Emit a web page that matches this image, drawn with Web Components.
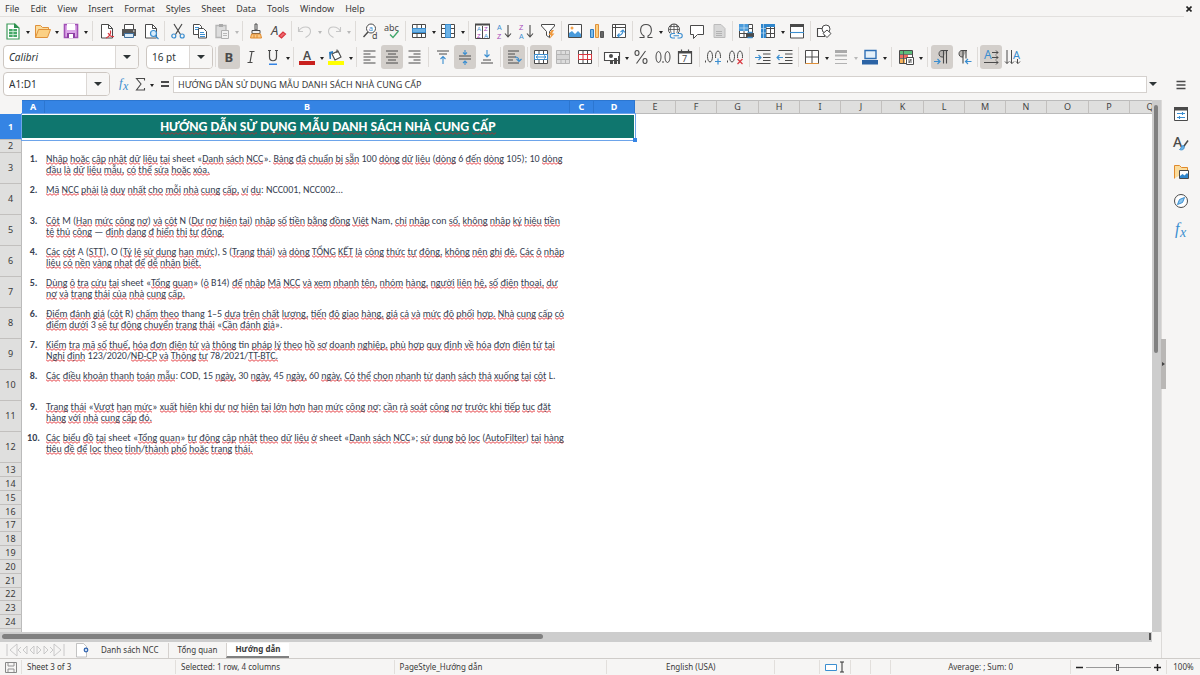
<!DOCTYPE html>
<html lang="vi">
<head>
<meta charset="utf-8">
<title>Danh sách nhà cung cấp - Calc</title>
<style>
html, body { margin: 0; height: 100%; overflow: hidden; }
body { font: 9px/12px "Noto Sans", sans-serif; color: #3a3a3a; background: #f6f5f4; }
</style>
</head>
<body>
<calc-app>
  <menu-bar slot="menu"></menu-bar>
  <tool-bar slot="tools" kind="standard"></tool-bar>
  <tool-bar slot="tools" kind="format"></tool-bar>
  <formula-bar slot="formula"></formula-bar>
  <sheet-grid slot="sheet"></sheet-grid>
  <sheet-tabs slot="tabs"></sheet-tabs>
  <side-bar slot="side"></side-bar>
  <status-bar slot="status"></status-bar>
</calc-app>
<script>
const D = '#4a4a4a', B = '#3b8ed0', V = '#a544b8';
const p = (d, c = D, w = 1, f = 'none') => `<path d="${d}" fill="${f}" stroke="${c}" stroke-width="${w}"/>`;
const f = (d, c = D) => `<path d="${d}" fill="${c}"/>`;
const t = (x, y, s, txt, c = D, extra = '') => `<text x="${x}" y="${y}" font-size="${s}" fill="${c}" ${extra}>${txt}</text>`;
const L = 'style="font-family:\'Liberation Sans\',sans-serif"';
const S = 'style="font-family:\'Liberation Serif\',serif;font-style:italic"';
const grid = (c = D, fill = '#fff') => p('M4.5 4.5h13v13h-13zM4.5 8.5h13M4.5 13.5h13M9 4.5v13M13.5 4.5v13', c, 1, fill);
const ICONS = {
  new: p('M5 4h8l4 4v11H5z', '#3f9b5b', 1.2, '#fff') + f('M12 3l5 5h-5z', '#2f9150') + f('M7 9h8v8H7z', '#46a868') + p('M7 11.5h8M7 14.5h8M11 9v8', '#d8f0df', .8),
  open: p('M4.5 17.5v-12h5l2 2h6v2', '#e0913a', 1, '#fbdc9c') + p('M4.5 17.5l3-8h12l-3 8z', '#e0913a', 1, '#fbd084'),
  save: p('M4.5 4.5h13v13h-13z', '#a04fb5', 1.6, '#dca7e8') + f('M7 4h8v6H7z', '#fff') + f('M7 13h8v5H7z', '#8d3fa3') + f('M9 14h4v4H9z', '#fff'),
  pdf: p('M5.5 4.5h7l4 4v9.500h-11z', D, 1, '#fff') + p('M12.500 4.500v4h4') + p('M10 18c4-1 5-5 4.500-7.500M12 13c2 3 3 4 6 3.500', '#d9363e', 1.2),
  print: f('M4 9h14v7H4z', '#555') + p('M6.5 9V4.500h9V9', D, 1, '#fff') + p('M6.500 13.500h9v4h-9z', '#3f6f9d', 1, '#dcecf8') + f('M15 10.500h1.500v1H15z', '#fff'),
  preview: p('M5.500 4.500h7l4 4v9.500h-11z', D, 1, '#fff') + p('M12.500 4.500v4h4') + p('M16.500 13.500a3 3 0 1 1-6 0a3 3 0 1 1 6 0M15.500 16l3 3', B, 1.2, '#d9edfb'),
  cut: p('M7 4l6.500 10.500M15 4L8.500 14.500', D, 1.2) + p('M8.800 16a2 2 0 1 1-4 0a2 2 0 1 1 4 0M17.200 16a2 2 0 1 1-4 0a2 2 0 1 1 4 0', B, 1.2),
  copy: p('M4.500 4.500h6l2 2v8h-8z', D, 1, '#fff') + p('M6 7.500h4M6 9.500h4', B) + p('M9.500 8.500h5l3 3v6.500h-8z', D, 1, '#fff') + p('M11 12.500h4M11 14.500h5M11 16.500h5', B),
  paste: p('M5 5.500h10v12H5z', '#b5b5b5', 1.300, '#ddd') + f('M8 4h4v3H8z', '#aaa') + p('M10.500 10.500h7v8h-7z', '#b0b0b0', 1, '#f2f2f2') + p('M12 13.500h4M12 15.500h4', '#b8b8b8'),
  brush: p('M10 4h2v6h-2zM7 10.500h8v3H7z', D, 1, '#eee') + p('M6.500 14h9l1 4h-11z', '#e08a2c', 1, '#f9c784') + p('M9 15v3M12 15v3', '#e08a2c'),
  clear: t(4, 15, 13, 'A', D, 'font-style="italic"') + p('M12 16l4-4l2.500 2l-4 4z', '#d9363e', 1.200, '#ef6a70'),
  undo: p('M4.500 7v4.500H9M4.500 11.500c3-6 12-6 12 0c0 3-3 5-5 6', '#c6c6c6', 1.100),
  redo: p('M17.500 7v4.500H13M17.500 11.500c-3-6-12-6-12 0c0 3 3 5 5 6', '#c6c6c6', 1.100),
  find: `<circle cx="12" cy="8.500" r="4.500" fill="#fff" stroke="${D}"/>` + p('M9 12l-4.500 5', D, 1.400) + t(9.800, 11, 7.500, 'a', B) + t(13, 18.500, 9, 'd', D),
  spell: t(3, 11, 9, 'abc') + p('M9 14.500l3 3L17.500 11', '#3fa66a', 1.300),
  row: grid() + p('M4.500 8.500h13v4h-13z', B, 1, '#6cb2e6'),
  col: grid() + p('M8.500 4.500h5v13h-5z', B, 1, '#6cb2e6'),
  sort: p('M4.500 4.500h14v14h-14zM11.500 6v12', D, 1, '#fff') + f('M4 3.500h15v2H4z') + t(6, 11, 6, 'A', B, L) + t(6, 18, 6, 'Z', V, L) + t(13, 11, 6, 'Z', V, L) + t(13, 18, 6, 'A', B, L),
  az: t(4, 9.500, 7, 'A', B, L) + t(4, 18.500, 7, 'Z', V, L) + p('M15 5v12M12 13.500l3 3.500l3-3.500', D, 1.100),
  za: t(4, 9.500, 7, 'Z', V, L) + t(4, 18.500, 7, 'A', B, L) + p('M15 5v12M12 13.500l3 3.500l3-3.500', D, 1.100),
  filter: p('M4.500 4.500h13v1.500l-5 5.500v6l-3-2v-4l-5-5.500z', D, 1, '#fff') + f('M14.500 10l-3 5h2.500l-1.500 4l5-5.500h-2.500l2-3.500z', '#f09a3e'),
  image: p('M4.500 4.500h13v13h-13z', D, 1, '#fff') + f('M5 17v-4l3-2l3 3l3-3l3 3v3z', '#4a9bdb') + `<circle cx="8" cy="8" r="1.500" fill="#f3a24e"/>`,
  chart: p('M4.500 9.500h3v8h-3z', '#2f7dc0', 1, '#7dbdea') + p('M9.500 4.500h3v13h-3z', '#e0913a', 1, '#fbd084') + p('M14.500 11.500h3v6h-3z', '#555', 1, '#666'),
  pivot: p('M4.500 4.500h13v13h-13zM4.500 7.500h13M7.500 4.500v13', D, 1, '#fff') + p('M10 15.500c3 0 5-2 5-5M12.500 12l2.500-2l2 2.500M11.500 13.500l-2 2l2 2', B, 1.100),
  omega: p('M4.500 17.500h4.500v-1.500c-5-3-4.500-11.500 2-11.500s7 8.500 2 11.500v1.500h4.500', D, 1.100),
  link: `<circle cx="10" cy="9.500" r="5.500" fill="#fff" stroke="${D}"/>` + p('M4.500 9.500h11M10 4v11M6 6.500h8M8 4.500c-2 3-2 7 0 10M12 4.500c2 3 2 7 0 10', D, .8) + f('M6 13h13v6H6z', '#f6f5f4') + p('M11 13.500H8.500c-3 0-3 4.500 0 4.500H11M13.500 13.500H16c3 0 3 4.500 0 4.500h-2.500M9.500 15.800h5.500', B, 1.100),
  comment: p('M4.500 5.500h13v9h-6l-4 4v-4h-3z', D, 1, '#fff'),
  page: p('M6 4.500h7l4 4v9H6z', '#bcbcbc', 1, '#d8d8d8') + p('M8 11.500h6M8 13.500h6M8 15.500h6', '#b2b2b2'),
  printarea: grid() + f('M4 4h9.500v7H4z', '#4a9bdb') + p('M4.500 8h9M9 4v7', '#cfe6f7', .7) + f('M11 13h8v4h-8z') + p('M12.500 12.500h5M12.500 17.500h5', B, 1.300),
  freeze: grid() + f('M4 4h5v14H4zM9 4h9v3H9z', '#2f86cc') + p('M4 8.500h5M4 13h5M6.500 4v14', '#bfe0f7', .7),
  split: p('M4.500 5v13h13V5', D, 1, '#fff') + f('M4 4h14v3H4z') + p('M4 12.500h14', B, 1.100, 'none'),
  shapes: p('M4.500 8.500h7v8h-7z', D, 1.100, '#fff') + `<circle cx="13" cy="9" r="4" fill="#fff" stroke="${D}"/>` + p('M14 10l4 3.500l-4 4l-4-4z', D, 1, '#fff'),

  bold: t(6.500, 16, 13, 'B', D, 'font-weight="700"'),
  italic: p('M9.500 5.500h5M7.500 16.500h5M12 5.500l-2 11', D, 1.200),
  underline: p('M7.500 4.500v6.500c0 5 7 5 7 0v-6.500M6 4.500h3M13 4.500h3', D, 1.200) + f('M7 17.500h8v1.500H7z', '#3584e4'),
  color: t(7, 14, 12, 'A', D, 'font-weight="600"') + f('M3 15h16v4H3z', '#c9211e'),
  fill: p('M7 8l6-3l3 6l-6 3zM12 7V3.500', D, 1.100, '#fff') + f('M4 6l4-1v2l-2 1v5H4.500z', '#2f7dc0') + f('M3 15h16v4H3z', '#ffff00'),
  left: p('M4.500 5h12M4.500 8h7M4.500 11h12M4.500 14h7M4.500 17h12'),
  center: p('M5 5h12M7 8h8M5 11h12M7 14h8M5 17h12'),
  right: p('M5.500 5h12M10.500 8h7M5.500 11h12M10.500 14h7M5.500 17h12'),
  top: p('M5 5h12M7 8h8') + p('M11 18v-7M8.500 13l2.500-2.500L13.500 13', B, 1.100),
  middle: p('M5 10h12M5 13h12') + p('M11 4v4M9 6.500l2 2l2-2M11 19v-4M9 17l2-2l2 2', B, 1.100),
  bottom: p('M5 17h12M7 14h8') + p('M11 4v7M8.500 8.500l2.500 2.500l2.500-2.500', B, 1.100),
  wrap: p('M5 5h11M5 8h7M5 11h8M5 14h5M5 17h11') + p('M12 11c3 0 4 1 4 4M13.500 13l2.500 2.500L18.500 13', B, 1.100),
  merge: grid() + p('M4.500 8.500h13v5h-13z', B, 1, '#fff') + p('M6 11h10M8 9.500L6 11l2 1.500M14 9.500l2 1.500l-2 1.500', B),
  mergecells: grid('#b5b5b5', '#ddd') + f('M5 9h12v4H5z', '#d5d5d5'),
  unmerge: grid() + p('M4.500 8.500h13v5h-13zM9 8.500v5M13.500 8.500v5', '#d9363e', 1, '#fff'),
  currency: p('M3.500 6.500h15v8h-15z', D, 1.100, '#fff') + `<circle cx="10" cy="10" r="2" fill="${D}"/>` + f('M9 14h3v4H9zM13 12h3v6h-3zM17 10h2v8h-2z'),
  percent: p('M15.500 5l-9 12.500M9 7a2 2.500 0 1 1-4 0a2 2.500 0 1 1 4 0M17 15a2 2.500 0 1 1-4 0a2 2.500 0 1 1 4 0', D, 1.100),
  decimal: p('M9 11a2.500 5.500 0 1 1-5 0a2.500 5.500 0 1 1 5 0M18 11a2.500 5.500 0 1 1-5 0a2.500 5.500 0 1 1 5 0M11 15v2', D, 1),
  date: p('M4.500 5.500h13v12h-13zM7.500 3.500v3M14.500 3.500v3', D, 1.200, '#fff') + f('M4 5h14v2.500H4z') + t(8, 16, 9, '7'),
  adddec: p('M9.500 10.500a2.500 5.500 0 1 1-5 0a2.500 5.500 0 1 1 5 0M17.500 10.500a2.500 5.500 0 1 1-5 0a2.500 5.500 0 1 1 5 0M2.500 14.500v2', D, 1) + f('M12 12h7v7h-7z', '#f6f5f4') + p('M15 12.500v6M12 15.500h6', B, 1.200),
  deldec: p('M9.500 10.500a2.500 5.500 0 1 1-5 0a2.500 5.500 0 1 1 5 0M17.500 10.500a2.500 5.500 0 1 1-5 0a2.500 5.500 0 1 1 5 0M2.500 14.500v2', D, 1) + f('M12 12h7v7h-7z', '#f6f5f4') + p('M12.500 13l5 5M17.500 13l-5 5', '#d9363e', 1.200),
  indent: p('M4.500 4.500h14M11 8h7.500M11 11.500h7.500M11 14.500h7.500M4.500 17.500h14') + p('M3 11.500h6M6.500 9l2.500 2.500L6.500 14', B, 1.100),
  outdent: p('M4.500 4.500h14M11 8h7.500M11 11.500h7.500M11 14.500h7.500M4.500 17.500h14') + p('M9 11.500H3M5.500 9L3 11.500L5.500 14', B, 1.100),
  borders: p('M4.500 4.500h13v13h-13zM11 4.500v13M4.500 11h13', D, 1, '#fff') + p('M4.500 17.500h13', '#e0913a'),
  lines: p('M5 5.500h12', '#aaa', 3) + p('M5 9.500h12', '#b2b2b2', 2) + p('M5 13.500h12M5 17.500h12', '#b2b2b2', 1, 'none'),
  bcolor: p('M6 4.500h11v8H6z', '#2f6fb5', 1.400, '#e4f0fa') + f('M3 14h16v4.500H3z', '#2b63a5'),
  cond: p('M4.500 4.500h13v13h-13z', D, 1, '#fff') + f('M5 5h12v3H5z', '#5bbd7b') + f('M5 9h8v3H5z', '#ef6a60') + f('M5 13h5v4H5z', '#f5b25c') + p('M4.500 8.500h13M4.500 12.500h13M8.500 4.500v13', D, .8) + p('M11.500 11.500h7v7h-7z', D, 1, '#fff') + p('M13 14h4M13 16h4M16 13l-2 4', D, .8),
  ltr: p('M17 4.500H11c-4 0-4 6.500 0 6.500h1', D, 1, '#b8b5b2') + p('M12.500 4.500v13M15.500 4.500v13', D, 1.100) + p('M3 15.500h6M6.500 13L9 15.500L6.500 18', B, 1.200),
  rtl: p('M14 4.500H9c-4 0-4 6.500 0 6.500h1', D, 1, '#b8b5b2') + p('M10 4.500v13M13 4.500v8', D, 1.100) + p('M18.500 15.500h-6M15 13l-2.500 2.500L15 18', B, 1.200),
  texth: t(4, 13, 12, 'A', B) + p('M12 6.500h6M16 4.500l2 2l-2 2M12 11.500h6M16 9.500l2 2l-2 2M4 16.500h14M16 14.500l2 2l-2 2', D, 1),
  textv: t(11, 13, 11, 'A', B) + p('M5 4v13.500M3 15.500l2 2l2-2M9.500 4v13.500M8 15.500l2 2l2-2M15.500 13v4.500M14 15.500l2 2l2-2', D, 1),

  fx: t(6, 14, 13, 'f', B, S) + t(10, 17, 12, 'x', B, S),
  sidefx: t(5, 15, 16, 'f', B, S) + t(10, 18, 14, 'x', B, S),
  sigma: p('M15.500 7.500V5.500H7.500l4.500 5.500l-4.500 6h8v-2', D, 1.100),
  equals: p('M7 9h8M7 13h8', D, 1.800),
  menu: p('M6.500 7.500h9M6.500 11h9M6.500 14.500h9', D, 1.500),
  props: p('M4.500 5.500h13v12h-13z', D, 1, '#fff') + f('M4 4h14v3.500H4z') + p('M7 10.500h8M12.500 9v3M7 14.500h8M9.500 13v3', B, 1.100),
  styles: t(3, 15, 14, 'A', D, 'font-weight="500"') + p('M18 8.500l-5 7', D, 1.500) + p('M13.500 13.500c-2.500 0-2 3-4 4c2.500 1 5.500 0 4.500-3.500z', B, 1, '#6cb2e6'),
  gallery: p('M4.500 17.500v-13h5l2 2h6v3', '#e08a2c', 1, '#fbdc9c') + p('M9.500 9.500h9v8h-9z', D, 1, '#fff') + f('M10 17v-2l2.500-2l2 1.500L17 12l1 1v4z', '#2f86cc'),
  navigator: `<circle cx="11" cy="11" r="6.500" fill="#fff" stroke="${D}"/>` + p('M14.500 7.500l-2 5l-5 2l2-5z', B, 1, '#8cc4ec') ,
  addsheet: p('M4.500 4.500h7l3 3v10.500h-10z', '#aaa', .7, '#fff') + `<circle cx="14" cy="11" r="1.800" fill="#cfe0f5" stroke="#2f62ae" stroke-width="1.200"/>`,
  disk: p('M5.500 6.500h11v10h-11z', '#888', 1) + p('M8 6.500v3.500h6V6.500M8 16.500v-3.500h6v3.500', '#888', .9),
  first: p('M5 5v12M15 5L8 11l7 6zM19 8l-3 3l3 3', '#c4c4c4', .9),
  prev: p('M10 7L6 11l4 4zM17 7l-4 4l4 4z', '#c4c4c4', .9),
  next: p('M5 7l4 4l-4 4zM12 7l4 4l-4 4z', '#c4c4c4', .9),
  last: p('M17 5v12M7 5l7 6l-7 6zM3 8l3 3l-3 3', '#c4c4c4', .9)
};

function define(name, css, render) {
  customElements.define(name, class extends HTMLElement {
    connectedCallback() {
      if (this.shadowRoot) return;
      this.attachShadow({ mode: 'open' }).innerHTML = `<style>:host,*{box-sizing:border-box}${css}</style>${render(this)}`;
    }
  });
}

define('ui-icon', ':host{display:block;width:22px;height:22px}svg{display:block;width:22px;height:22px}text{font-family:"Noto Sans",sans-serif}',
  el => `<svg viewBox="0 0 22 22" aria-hidden="true">${ICONS[el.getAttribute('name')] || ''}</svg>`);

define('tool-button', `
  :host{display:flex;align-items:center}
  button{border:0;background:none;padding:0;margin:0}
  .main{width:var(--button-width,22px);height:24px;border-radius:3px;display:grid;place-content:center}
  :host([on]) .main{background:#d3cfcb}
  .drop{width:7px;height:24px;display:grid;place-items:center}
  .drop::before{content:"";border:2px solid transparent;border-top:3px solid #222;border-bottom:0;margin-top:3px}
  :host([off]) .drop::before{border-top-color:#b8b8b8}`,
  el => `<button class="main" aria-label="${el.getAttribute('icon')}"><ui-icon name="${el.getAttribute('icon')}"></ui-icon></button>` +
    (el.hasAttribute('drop') ? `<button class="drop" aria-label="${el.getAttribute('icon')} options"></button>` : ''));

define('combo-field', `
  :host{display:flex;height:24px;border:1px solid #cdc7c2;border-radius:4px;background:#fff;overflow:hidden}
  input{flex:1;min-width:0;border:0;outline:0;padding:0 0 0 5px;background:none;font:inherit;font-size:10px;color:#2e3436}
  :host([italic]) input{font-style:italic}
  button{width:23px;border:0;border-left:1px solid #dcd8d5;background:#f7f6f5;padding:0;display:grid;place-items:center}
  button::before{content:"";border:4px solid transparent;border-top:4px solid #2e3436;border-bottom:0}`,
  el => `<input aria-label="${el.getAttribute('label')}" value="${el.getAttribute('value')}"><button aria-label="${el.getAttribute('label')} list"></button>`);

define('calc-app', `
  :host{display:flex;flex-direction:column;height:100vh;overflow:hidden}
  .middle{flex:1;min-height:0;display:flex}
  .work{flex:1;min-width:0;display:flex;flex-direction:column}
  ::slotted(sheet-grid){flex:1;min-height:0}`,
  () => `<slot name="menu"></slot><slot name="tools"></slot>
  <div class="middle"><div class="work"><slot name="formula"></slot><slot name="sheet"></slot><slot name="tabs"></slot></div><slot name="side"></slot></div>
  <slot name="status"></slot>`);

define('menu-bar', `
  :host{display:block;height:17px;padding-right:16px;position:relative}
  nav{display:flex;gap:11px;height:17px;padding:2px 0 0 5px;border-bottom:1px solid #e2e0de}
  button{border:0;background:none;padding:0;font:inherit;color:inherit;height:13px}
  .close{position:absolute;right:4px;top:2px;width:14px}
  svg{display:block;margin:auto}`,
  () => `<nav>${'File Edit View Insert Format Styles Sheet Data Tools Window Help'.split(' ').map(x => `<button>${x}</button>`).join('')}</nav>
  <button class="close" aria-label="Close"><svg width="6" height="6" viewBox="0 0 6 6"><path d="M.5.5l5 5M5.500.5l-5 5" stroke="#222" stroke-width="1.600"/></svg></button>`);

const BARS = {
  standard: 'new+ open+ save+ || pdf print preview | cut copy paste-+ | brush clear | undo-+ redo-+ || find spell | row+ col+ | sort az za filter | image chart pivot | omega+ link comment page | printarea freeze+ split | shapes',
  format: 'bold! italic underline+ | color+ fill+ | left center! right || top middle! bottom | wrap! | merge! mergecells unmerge | currency+ percent decimal date || adddec deldec | indent outdent | borders+ lines-+ bcolor+ || cond+ || ltr! rtl | texth! textv'
};
define('tool-bar', `
  :host{display:flex;align-items:center;height:27px;padding-left:2px}
  :host([kind=format]){height:26px;padding-left:3px}
  .sep{width:5px;height:20px;display:grid;justify-content:center}
  .sep.wide{width:7px}
  .sep::before{content:"";width:1px;background:#dedbd8}
  .font{width:136px;margin-right:7px}
  .size{width:67px}`,
  el => (el.getAttribute('kind') === 'format' ? '<combo-field class="font" italic label="Font name" value="Calibri"></combo-field><combo-field class="size" label="Font size" value="16 pt"></combo-field><span class="sep"></span>' : '') +
    BARS[el.getAttribute('kind')].split(' ').map(s => s[0] === '|' ? `<span class="sep${s[1] ? ' wide' : ''}"></span>` :
      `<tool-button icon="${s.match(/\w+/)[0]}"${s.includes('+') ? ' drop' : ''}${s.includes('-') ? ' off' : ''}${s.includes('!') ? ' on' : ''}></tool-button>`).join(''));

define('formula-bar', `
  :host{display:flex;align-items:center;height:30px;padding:0 4px 2px 3px;--button-width:16px}
  combo-field{width:107px;margin-right:6px}
  .eq{margin-left:2px}
  .line{flex:1;min-width:0;height:17px;border:1px solid #d5d1ce;background:#fff;padding:0 4px;font:inherit;color:#3a3a3a;outline:0}
  .more{width:11px;height:17px;border:0;background:none;padding:0;display:grid;place-items:center}
  .more::before{content:"";border:4px solid transparent;border-top:4px solid #2e3436;border-bottom:0}`,
  () => `<combo-field label="Name box" value="A1:D1"></combo-field>
  <tool-button icon="fx"></tool-button><tool-button icon="sigma" drop></tool-button><tool-button class="eq" icon="equals"></tool-button>
  <input class="line" aria-label="Input line" value="HƯỚNG DẪN SỬ DỤNG MẪU DANH SÁCH NHÀ CUNG CẤP"><button class="more" aria-label="Expand formula bar"></button>`);

const NOTES = [
  ['Nhập hoặc cập nhật dữ liệu tại sheet «Danh sách NCC». Bảng đã chuẩn bị sẵn 100 dòng dữ liệu (dòng 6 đến dòng 105); 10 dòng', 'đầu là dữ liệu mẫu, có thể sửa hoặc xóa.'],
  ['Mã NCC phải là duy nhất cho mỗi nhà cung cấp, ví dụ: NCC001, NCC002...'],
  ['Cột M (Hạn mức công nợ) và cột N (Dư nợ hiện tại) nhập số tiền bằng đồng Việt Nam, chỉ nhập con số, không nhập ký hiệu tiền', 'tệ thủ công — định dạng đ hiển thị tự động.'],
  ['Các cột A (STT), O (Tỷ lệ sử dụng hạn mức), S (Trạng thái) và dòng TỔNG KẾT là công thức tự động, không nên ghi đè. Các ô nhập', 'liệu có nền vàng nhạt để dễ nhận biết.'],
  ['Dùng ô tra cứu tại sheet «Tổng quan» (ô B14) để nhập Mã NCC và xem nhanh tên, nhóm hàng, người liên hệ, số điện thoại, dư', 'nợ và trạng thái của nhà cung cấp.'],
  ['Điểm đánh giá (cột R) chấm theo thang 1–5 dựa trên chất lượng, tiến độ giao hàng, giá cả và mức độ phối hợp. Nhà cung cấp có', 'điểm dưới 3 sẽ tự động chuyển trạng thái «Cần đánh giá».'],
  ['Kiểm tra mã số thuế, hóa đơn điện tử và thông tin pháp lý theo hồ sơ doanh nghiệp, phù hợp quy định về hóa đơn điện tử tại', 'Nghị định 123/2020/NĐ-CP và Thông tư 78/2021/TT-BTC.'],
  ['Các điều khoản thanh toán mẫu: COD, 15 ngày, 30 ngày, 45 ngày, 60 ngày. Có thể chọn nhanh từ danh sách thả xuống tại cột L.'],
  ['Trạng thái «Vượt hạn mức» xuất hiện khi dư nợ hiện tại lớn hơn hạn mức công nợ; cần rà soát công nợ trước khi tiếp tục đặt', 'hàng với nhà cung cấp đó.'],
  ['Các biểu đồ tại sheet «Tổng quan» tự động cập nhật theo dữ liệu ở sheet «Danh sách NCC»; sử dụng bộ lọc (AutoFilter) tại hàng', 'tiêu đề để lọc theo tỉnh/thành phố hoặc trạng thái.']
];
const KNOWN = new Set(['sheet', 'Nam', 'con', 'tin', 'M', 'N', 'A', 'O', 'S', 'R', 'L', 'COD', 'thang']);
const spell = s => s.replace(/[\p{L}\p{N}-]+[.,]?/gu, w => {
  const bare = w.replace(/[.,]$/, '');
  return /\d/.test(w) || KNOWN.has(bare) ? w : `<u>${w}</u>`;
});
const wave = c => `url("data:image/svg+xml,%3Csvg xmlns='http://www.w3.org/2000/svg' width='4' height='3'%3E%3Cpath d='M0 .7L2 2.300L4 .7' fill='none' stroke='%23${c}' stroke-width='1'/%3E%3C/svg%3E")`;
const COLS = 'A B C D E F G H I J K L M N O P Q'.split(' ');
const WIDTH = { A: 23, B: 525, C: 24, D: 41 };
const colWidth = (c, i) => WIDTH[c] || (i > 4 && (i - 6) % 4 === 0 ? 42 : 41);

define('sheet-grid', `
  :host{display:grid;grid-template:minmax(0,1fr) 10px / minmax(0,1fr) 10px;background:#fff}
  .view{overflow:hidden}
  table{border-collapse:separate;border-spacing:0;table-layout:fixed;width:1px}
  th,td{padding:0;font-weight:400;overflow:hidden}
  thead th{height:14px;line-height:12px;background:#dfdfde;border-right:1px solid #c2c0be;border-bottom:1px solid #bbb;border-top:1px solid #bbb;color:#444}
  thead .corner{background:#f6f5f4;border-color:transparent}
  thead .sel{background:#3584e4;color:#fff;font-weight:700;border-color:#2c76d0}
  tbody th{background:#dfdfde;border-right:1px solid #bbb;border-bottom:1px solid #c2c0be;line-height:12px;height:14px}
  tbody th.short{height:13px}
  tbody th.tall{height:31px}
  tbody th.head{height:26px;background:#3584e4;color:#fff;font-weight:700}
  .title{position:relative;overflow:visible;background:#0f766e;border:1px solid #fff;border-width:1px 1px 2px 0;box-shadow:0 0 0 1px #6da4ea;color:#fff;font:700 14px/20px Carlito,Lato,sans-serif;text-align:center}
  .title::after{content:"";position:absolute;right:-3px;bottom:-4px;width:4px;height:4px;background:#3584e4}
  .no,.note{vertical-align:top;font:10px/11px Carlito,Lato,sans-serif;color:#374151;white-space:nowrap;overflow:visible}
  .no{text-align:center;font-weight:700}
  .note p{margin:0;padding-left:1px}
  u{text-decoration:none;background:${wave('e5484d')} left bottom/4px 3px repeat-x}
  .title u{background-image:${wave('9a3b3b')}}
  .v,.h{background:#cdcdcd;display:flex}
  .v{padding:5px 3px 0 2px;border-right:1px solid #dcdad8}
  .v i{width:5px;height:47%;border-radius:3px;background:#808080}
  .h{padding:2px 0 3px 2px;justify-content:space-between}
  .h i{width:47%;height:5px;border-radius:3px;background:#808080}
  .h b{width:2px;height:7px;margin:-1px 1px 0 0;background:#555}
  .end{background:#f6f5f4;border-right:1px solid #dcdad8}`,
  () => {
    const row = n => {
      if (n === 1) return `<tr><th class="head" scope="row">1</th><td class="title" colspan="4">${spell('HƯỚNG DẪN SỬ DỤNG MẪU DANH SÁCH NHÀ CUNG CẤP')}</td></tr>`;
      const note = NOTES[n - 3];
      if (note) return `<tr><th class="tall" scope="row">${n}</th><td class="no">${n - 2}.</td><td class="note">${note.map(l => `<p>${spell(l)}</p>`).join('')}</td></tr>`;
      return `<tr><th class="${n === 2 || n === 17 || n === 22 ? 'short' : ''}" scope="row">${n > 24 ? '' : n}</th></tr>`;
    };
    return `<div class="view"><table><colgroup><col style="width:22px">${COLS.map((c, i) => `<col style="width:${colWidth(c, i)}px">`).join('')}</colgroup>
    <thead><tr><th class="corner"></th>${COLS.map((c, i) => `<th scope="col"${i < 4 ? ' class="sel"' : ''}>${c}</th>`).join('')}</tr></thead>
    <tbody>${Array.from({ length: 25 }, (_, i) => row(i + 1)).join('')}</tbody></table></div>
    <div class="v"><i></i></div><div class="h"><i></i><b></b></div><div class="end"></div>`;
  });

define('sheet-tabs', `
  :host{display:flex;align-items:center;height:16px;background:#f6f5f4;border-right:1px solid #dcdad8;overflow:hidden;font-size:8px}
  .nav{display:flex;padding-left:5px}
  .nav button{width:15px;border:0;background:none;padding:0;display:grid;place-content:center}
  .nav .add{width:19px;margin-left:8px}
  .tab{height:15px;line-height:14px;border:0;background:none;font:inherit;color:inherit;padding:0 9px}
  .tab+.tab{border-left:1px solid #d5d1ce}
  .tab.on{background:#fff;font-weight:700;border-bottom:2px solid #808080;padding:0 8px}`,
  () => `<div class="nav">${['first', 'prev', 'next', 'last', 'addsheet'].map(n => `<button${n === 'addsheet' ? ' class="add"' : ''} aria-label="${n} sheet"><ui-icon name="${n}"></ui-icon></button>`).join('')}</div>
  <button class="tab">Danh sách NCC</button><button class="tab">Tổng quan</button><button class="tab on">Hướng dẫn</button>`);

define('side-bar', `
  :host{display:flex;flex-direction:column;align-items:center;gap:5px;width:38px;padding-top:3px;position:relative}
  .grip{position:absolute;left:-1px;top:269px;width:5px;height:50px;background:#b9b7b5;display:grid;place-items:center;border:0;padding:0}
  .grip::before{content:"";border:2px solid transparent;border-left:3px solid #444;border-right:0}`,
  () => `${['menu', 'props', 'styles', 'gallery', 'navigator', 'sidefx'].map(n => `<tool-button icon="${n}"></tool-button>`).join('')}<button class="grip" aria-label="Hide sidebar"></button>`);

define('status-bar', `
  :host{display:flex;align-items:center;height:17px;border-top:1px solid #cfccc9;line-height:14px;font-size:8px}
  span{height:14px;min-width:0;border-right:1px solid #e2dfdc;white-space:nowrap;display:flex;align-items:center;justify-content:center}
  .doc{width:22px}
  .left{justify-content:flex-start}
  .left::before{content:"";width:5px}
  .pos{flex:154}
  .sum{flex:219}
  .style{flex:213}
  .lang{flex:168}
  .ovr{width:45px}
  .mode{width:31px}
  .small{width:20px}
  .avg{flex:180}
  .zoom{width:96px;gap:3px}
  .zoom button{width:7px;height:12px;border:0;padding:0;background:none;display:grid;place-items:center}
  input{-webkit-appearance:none;appearance:none;width:65px;height:9px;margin:0;background:linear-gradient(#999,#999) center/100% 1px no-repeat}
  input::-webkit-slider-thumb{-webkit-appearance:none;width:3px;height:7px;border:1px solid #555;background:#eee}
  .pct{width:33px;border:0}`,
  () => `<span class="doc"><ui-icon name="disk"></ui-icon></span><span class="pos left">Sheet 3 of 3</span><span class="sum left">Selected: 1 row, 4 columns</span>
  <span class="style left">PageStyle_Hướng dẫn</span><span class="lang">English (USA)</span><span class="ovr"></span>
  <span class="mode"><svg width="20" height="12" viewBox="0 0 20 12"><path d="M.5 3.500h11v6H.5z" fill="#fff" stroke="#3b8ed0"/><path d="M15 1h4M17 1v10M15 11h4" fill="none" stroke="#333"/></svg></span>
  <span class="small"></span><span class="small"></span><span class="avg">Average: ; Sum: 0</span>
  <span class="zoom"><button aria-label="Zoom out"><svg width="7" height="7"><path d="M0 3.500h7" stroke="#222" stroke-width="1.500"/></svg></button><input type="range" aria-label="Zoom" min="0" max="100" value="49"><button aria-label="Zoom in"><svg width="7" height="7"><path d="M0 3.500h7M3.500 0v7" stroke="#222" stroke-width="1.500"/></svg></button></span><span class="pct">100%</span>`);
</script>
</body>
</html>
